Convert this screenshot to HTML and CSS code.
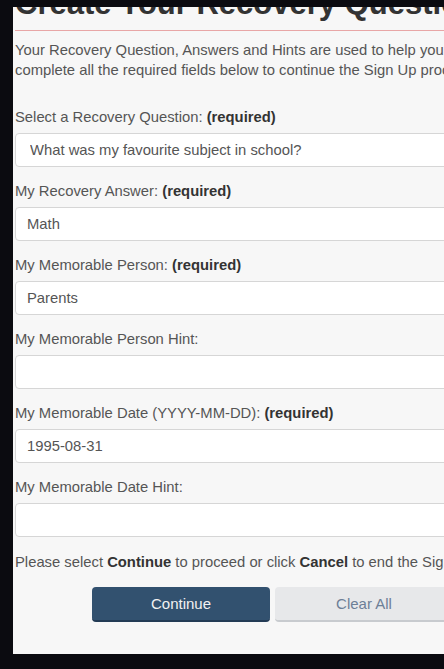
FILE: index.html
```html
<!DOCTYPE html>
<html lang="en">
<head>
<meta charset="utf-8">
<title>Create Your Recovery Question</title>
<link rel="stylesheet" href="styles.css">
</head>
<body>
<div class="screen">
  <div class="panel">
    <h1 class="title">Create Your Recovery Question</h1>
    <p class="intro">Your Recovery Question, Answers and Hints are used to help you<br>complete all the required fields below to continue the Sign Up process.</p>
    <form class="form">
      <div class="field">
        <label class="label" for="q">Select a Recovery Question: <strong>(required)</strong></label>
        <select class="control control-select" id="q">
          <option>What was my favourite subject in school?</option>
        </select>
      </div>
      <div class="field">
        <label class="label" for="a">My Recovery Answer: <strong>(required)</strong></label>
        <input class="control" id="a" type="text" value="Math">
      </div>
      <div class="field">
        <label class="label" for="p">My Memorable Person: <strong>(required)</strong></label>
        <input class="control" id="p" type="text" value="Parents">
      </div>
      <div class="field">
        <label class="label" for="ph">My Memorable Person Hint:</label>
        <input class="control" id="ph" type="text" value="">
      </div>
      <div class="field">
        <label class="label" for="d">My Memorable Date (YYYY-MM-DD): <strong>(required)</strong></label>
        <input class="control" id="d" type="text" value="1995-08-31">
      </div>
      <div class="field">
        <label class="label" for="dh">My Memorable Date Hint:</label>
        <input class="control" id="dh" type="text" value="">
      </div>
    </form>
    <p class="note">Please select <strong>Continue</strong> to proceed or click <strong>Cancel</strong> to end the Sign Up process.</p>
    <div class="actions">
      <button class="btn btn-primary" type="button">Continue</button>
      <button class="btn btn-secondary" type="button">Clear All</button>
    </div>
  </div>
</div>
</body>
</html>
```
FILE: styles.css
```css
html, body {
  margin: 0;
  padding: 0;
  background: #0b0b10;
  overflow: hidden;
}

.screen {
  width: 431px;
  height: 647px;
  padding: 7px 0 15px 13px;
  overflow: hidden;
}

.panel {
  display: flow-root;
  overflow: hidden;
  width: 560px;
  height: 647px;
  background: #f7f7f7;
  padding: 0 0 0 2px;
  box-sizing: border-box;
  font-family: "Liberation Sans", Arial, sans-serif;
  font-size: 14.8px;
  line-height: 20px;
  color: #555;
}

.title {
  width: 515px;
  margin: -20px 0 0 0;
  padding: 0 0 9px 0;
  font-size: 31px;
  line-height: 34px;
  font-weight: bold;
  color: #333;
  white-space: nowrap;
  border-bottom: 1px solid #e8a6a6;
}

.intro {
  margin: 9px 0 0 0;
  white-space: nowrap;
}

.form {
  width: 515px;
  margin-top: 27px;
  display: flex;
  flex-direction: column;
  gap: 14px;
}

.field {
  display: flex;
  flex-direction: column;
  gap: 6px;
}

.label {
  line-height: 20px;
  color: #555;
  white-space: nowrap;
}

.label strong {
  color: #333;
}

.control {
  box-sizing: border-box;
  height: 34px;
  width: 100%;
  margin: 0;
  padding: 0 11px;
  background: #fff;
  border: 1px solid #d6d6d6;
  border-radius: 4px;
  font-family: "Liberation Sans", Arial, sans-serif;
  font-size: 14.8px;
  color: #555;
  outline: none;
}

.control-select {
  -webkit-appearance: none;
  appearance: none;
  padding-left: 14px;
}

.note {
  margin: 15px 0 0 0;
  white-space: nowrap;
}

.note strong {
  color: #333;
}

.actions {
  width: 515px;
  margin-top: 15px;
  display: flex;
  justify-content: center;
  gap: 5px;
}

.btn {
  box-sizing: border-box;
  width: 178px;
  height: 35px;
  border: none;
  border-radius: 4px;
  font-family: "Liberation Sans", Arial, sans-serif;
  font-size: 15px;
  cursor: pointer;
}

.btn-primary {
  background: #32516f;
  color: #f2f2f2;
  border-bottom: 2px solid #233b55;
}

.btn-secondary {
  background: #e7e8ea;
  color: #6d7f97;
  border-bottom: 2px solid #c8cbcf;
}
```
